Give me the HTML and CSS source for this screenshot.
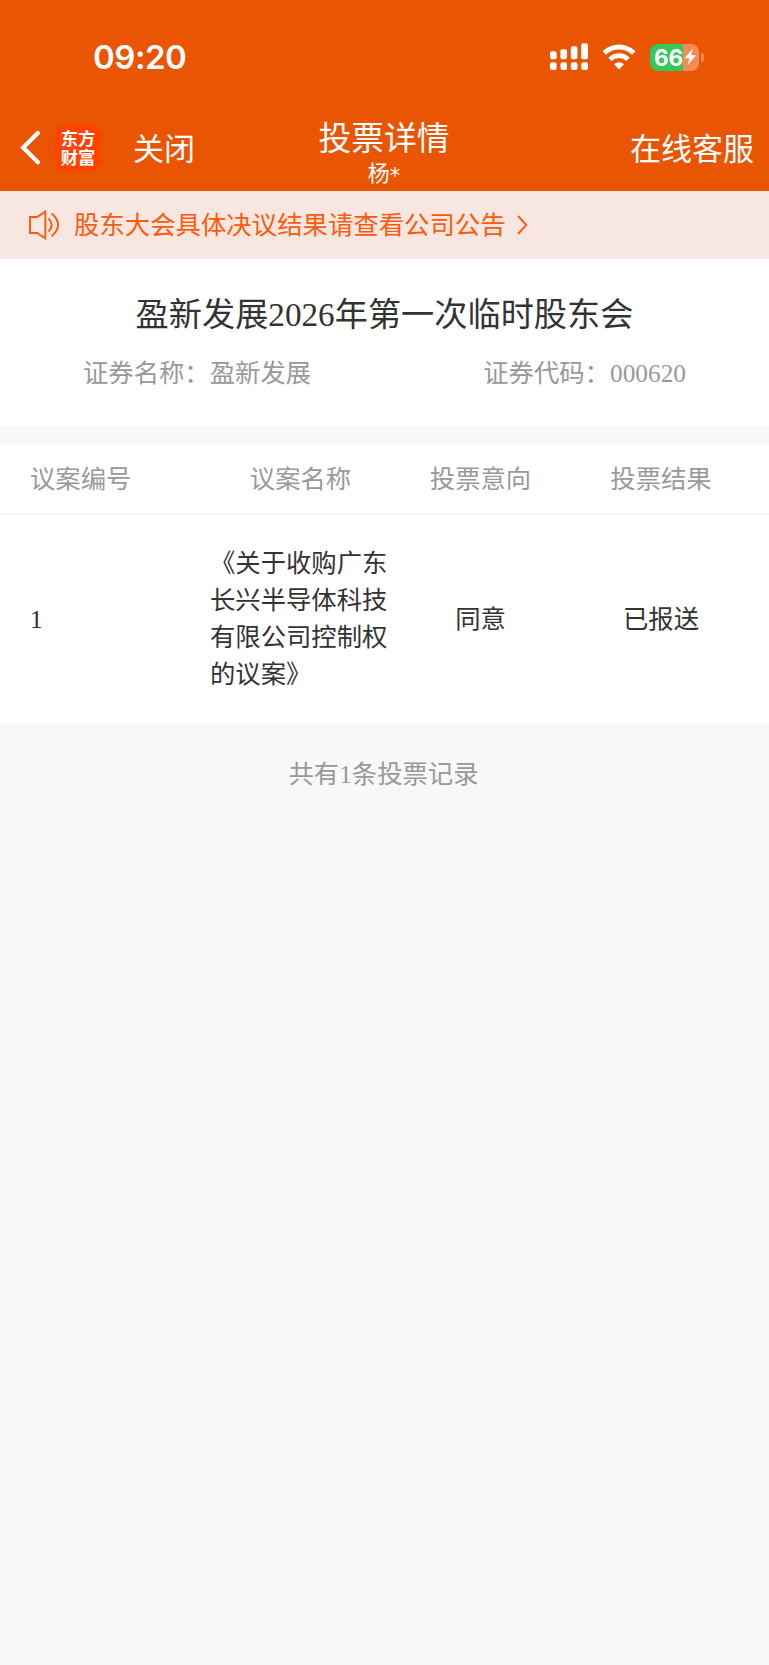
FILE: index.html
```html
<!DOCTYPE html>
<html lang="zh-CN">
<head>
  <meta charset="UTF-8">
  <title>投票详情</title>
  <link rel="stylesheet" href="styles.css">
</head>
<body>
  <header class="header">
    <div class="status-bar">
      <span class="time">09:20</span>
      <div class="status-icons">
        <svg class="signal" width="38" height="28" viewBox="0 0 38 28" fill="#fff">
          <rect x="0" y="8.3" width="6.6" height="8" rx="2"/>
          <rect x="10.4" y="6.3" width="6.6" height="10" rx="2"/>
          <rect x="20.8" y="3.3" width="6.6" height="13" rx="2"/>
          <rect x="31.2" y="0.3" width="6.8" height="16" rx="2"/>
          <rect x="0" y="19.3" width="6.6" height="7.6" rx="2.2"/>
          <rect x="10.4" y="19.3" width="6.6" height="7.6" rx="2.2"/>
          <rect x="20.8" y="19.3" width="6.6" height="7.6" rx="2.2"/>
          <rect x="31.2" y="19.3" width="6.8" height="7.6" rx="2.2"/>
        </svg>
        <svg class="wifi" width="34" height="26" viewBox="0 0 34 26">
          <path d="M2.2 9a21.2 21.2 0 0 1 29.6 0" fill="none" stroke="#fff" stroke-width="4.9"/>
          <path d="M7.9 15.4a13 13 0 0 1 18.2 0" fill="none" stroke="#fff" stroke-width="4.7"/>
          <path d="M12 20.3a7.2 7.2 0 0 1 10 0L17 25.4z" fill="#fff"/>
        </svg>
        <div class="battery">
          <div class="battery-body">
            <span>66</span>
            <svg width="13" height="18" viewBox="0 0 13 18"><path d="M8.8 0.5 0.6 10.2h4.9L3.6 17.3 12.2 7.3H7.2z" fill="#fff"/></svg>
          </div>
          <div class="battery-cap"></div>
        </div>
      </div>
    </div>
    <nav class="nav">
      <div class="nav-left">
        <svg class="back" width="20" height="36" viewBox="0 0 20 36"><path d="M17.9 3 3.2 17.6 17.9 32.3" fill="none" stroke="#fff" stroke-width="4.2" stroke-linecap="round"/></svg>
        <div class="logo"><span>东方</span><span>财富</span></div>
        <span class="nav-link">关闭</span>
      </div>
      <div class="nav-title">
        <h1>投票详情</h1>
        <p>杨<span class="mask">*</span></p>
      </div>
      <span class="nav-link nav-right">在线客服</span>
    </nav>
  </header>

  <div class="notice">
    <svg width="31" height="30" viewBox="0 0 31 30" fill="none" stroke="#ff5a0c" stroke-width="1.9">
      <path d="M1 7h7l8.3-5.4v26.8L8 23H1z"/>
      <path d="M19.5 8.3q6.4 6.5 0 13.2"/>
      <path d="M22.6 3.6q13 11 0 22.8"/>
    </svg>
    <span>股东大会具体决议结果请查看公司公告</span>
    <svg class="arrow" width="11" height="20" viewBox="0 0 11 20" fill="none" stroke="#ff5a0c" stroke-width="1.9"><path d="M1 1l8.3 9L1 19"/></svg>
  </div>

  <section class="meeting">
    <h2>盈新发展2026年第一次临时股东会</h2>
    <div class="meeting-info">
      <span>证券名称：盈新发展</span>
      <span>证券代码：000620</span>
    </div>
  </section>

  <section class="votes">
    <div class="row row-head">
      <div class="col-no">议案编号</div>
      <div>议案名称</div>
      <div>投票意向</div>
      <div>投票结果</div>
    </div>
    <div class="row row-item">
      <div class="col-no">1</div>
      <div class="col-name">《关于收购广东长兴半导体科技有限公司控制权的议案》</div>
      <div>同意</div>
      <div>已报送</div>
    </div>
  </section>

  <p class="total">共有1条投票记录</p>
</body>
</html>
```
FILE: styles.css
```css
* {
  margin: 0;
  padding: 0;
  box-sizing: border-box;
}

body {
  font-family: "Liberation Serif", "Noto Sans CJK SC", serif;
  font-size: 25.35px;
  line-height: 37px;
  color: #333;
  background-color: #f7f8fa;
  min-height: 100vh;
}

svg {
  display: block;
  flex-shrink: 0;
}

h1, h2 {
  font-weight: normal;
}

.header {
  height: 191px;
  background-color: #ea5504;
  color: #fff;
  font-family: "Noto Sans CJK SC", sans-serif;
}

.status-bar {
  height: 113px;
  padding: 1px 65px 0 93px;
  display: flex;
  justify-content: space-between;
  align-items: center;
}

.time {
  font-family: Inter, sans-serif;
  font-size: 33px;
  font-weight: 600;
  line-height: 40px;
  letter-spacing: -0.5px;
}

.status-icons {
  display: flex;
  align-items: center;
}

.wifi {
  margin: 0 14px 0 14px;
}

.battery {
  display: flex;
  align-items: center;
  gap: 2px;
}

.battery-body {
  width: 49px;
  height: 27px;
  padding-left: 4px;
  border-radius: 8px;
  background: linear-gradient(to right, #34c759 33px, #f28c54 33px);
  display: flex;
  align-items: center;
  font-family: Inter, sans-serif;
  font-size: 22.5px;
  font-weight: 700;
}

.battery-body svg {
  margin-left: 1px;
}

.battery-cap {
  width: 3px;
  height: 9px;
  border-radius: 0 4px 4px 0;
  background-color: #f28c54;
}

.nav {
  height: 78px;
  padding: 0 15px 0 20px;
  display: grid;
  grid-template-columns: 1fr auto 1fr;
}

.nav-left {
  display: flex;
  align-items: center;
  padding-bottom: 9px;
}

.logo {
  width: 46px;
  height: 46px;
  margin: 0 32px 0 15px;
  padding-top: 3px;
  border-radius: 9px;
  background-color: #ff4200;
  display: flex;
  flex-direction: column;
  align-items: center;
  font-size: 17.3px;
  font-weight: 700;
  line-height: 19.5px;
}

.nav-link {
  font-size: 31px;
  line-height: 37px;
}

.nav-left .nav-link {
  padding-bottom: 3px;
}

.nav-right {
  justify-self: end;
  padding-top: 15px;
}

.nav-title {
  margin-right: 6px;
  text-align: center;
}

.nav-title h1 {
  font-size: 32.8px;
  line-height: 45px;
}

.nav-title p {
  font-size: 22px;
  line-height: 26px;
}

.mask {
  font-family: "DejaVu Sans", sans-serif;
  font-size: 21px;
  line-height: 1;
  vertical-align: -2px;
}

.notice {
  height: 68px;
  padding-left: 29px;
  background-color: #f8e7e0;
  color: #ff5a0c;
  display: flex;
  align-items: center;
}

.notice span {
  margin: 0 11px 0 14px;
  font-size: 25.4px;
}

.meeting {
  height: 167px;
  padding-top: 32px;
  background-color: #fff;
  text-align: center;
}

.meeting h2 {
  font-size: 33.2px;
  line-height: 48px;
}

.meeting-info {
  display: flex;
  justify-content: space-between;
  padding: 16px 83px 0 83px;
  line-height: 37px;
  color: #999;
}

.votes {
  margin-top: 19px;
  background-color: #fff;
}

.row {
  display: grid;
  grid-template-columns: 180px 181px 179px 182px;
  align-items: center;
  padding-left: 30px;
  text-align: center;
}

.row-head {
  height: 70px;
  border-bottom: 2px solid #f4f5f6;
  color: #999;
}

.row-item {
  height: 208px;
}

.col-no,
.col-name {
  text-align: left;
}

.total {
  padding: 33px 2px 0 0;
  text-align: center;
  color: #999;
}
```
